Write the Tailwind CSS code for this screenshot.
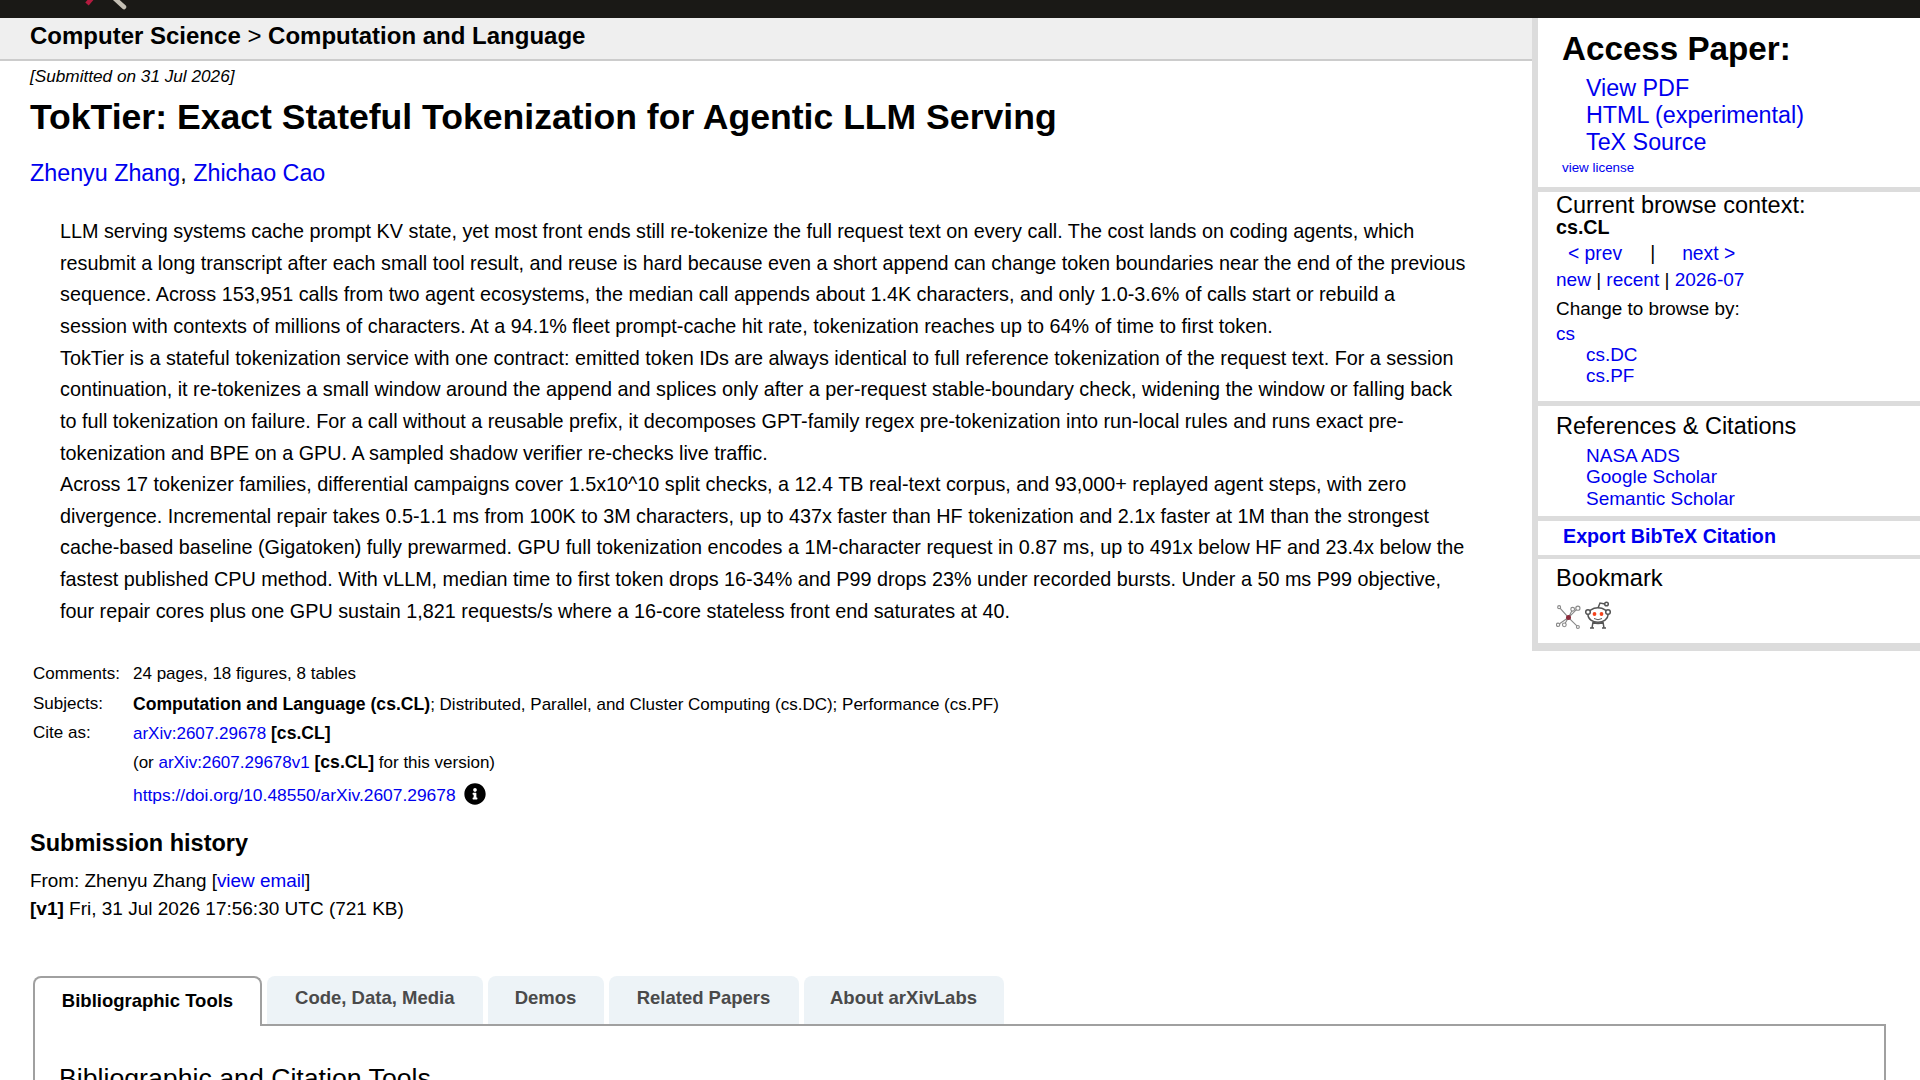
<!DOCTYPE html>
<html lang="en">
<head>
<meta charset="utf-8">
<title>TokTier</title>
<script src="https://cdn.jsdelivr.net/npm/@tailwindcss/browser@4"></script>
</head>
<body class="h-[1080px] overflow-hidden bg-white text-black font-['Liberation_Sans',Arial,sans-serif]">
<header class="h-[18px] bg-[#1a1916] overflow-hidden">
  <svg width="160" height="18" viewBox="0 0 160 18"><path d="M93 -3 L87 4" stroke="#b31b3f" stroke-width="4.5" fill="none"/><path d="M113 -3 L124 7" stroke="#c4bfb4" stroke-width="4.5" stroke-linecap="round" fill="none"/></svg>
</header>
<div class="flex items-start">
  <main class="w-[1532px] shrink-0">
    <div class="h-[43px] bg-[#efefef] border-b-2 border-[#ccc] pl-[30px] pt-[2.5px] text-[24px] leading-[30px] font-bold">Computer Science <span class="font-normal">&gt;</span> Computation and Language</div>
    <div class="pl-[30px] pr-[40px]">
      <p class="mt-[3px] text-[17.2px] leading-[24px] italic">[Submitted on 31 Jul 2026]</p>
      <h1 class="mt-[8px] text-[35.6px] leading-[42px] font-bold">TokTier: Exact Stateful Tokenization for Agentic LLM Serving</h1>
      <p class="mt-[20px] text-[23.3px] leading-[30px]"><a class="text-[#0000ee]" href="#">Zhenyu Zhang</a>, <a class="text-[#0000ee]" href="#">Zhichao Cao</a></p>
      <blockquote class="mt-[28.2px] pl-[30px] text-[19.8px] leading-[31.63px] whitespace-nowrap">
        LLM serving systems cache prompt KV state, yet most front ends still re-tokenize the full request text on every call. The cost lands on coding agents, which<br>
        resubmit a long transcript after each small tool result, and reuse is hard because even a short append can change token boundaries near the end of the previous<br>
        sequence. Across 153,951 calls from two agent ecosystems, the median call appends about 1.4K characters, and only 1.0-3.6% of calls start or rebuild a<br>
        session with contexts of millions of characters. At a 94.1% fleet prompt-cache hit rate, tokenization reaches up to 64% of time to first token.<br>
        TokTier is a stateful tokenization service with one contract: emitted token IDs are always identical to full reference tokenization of the request text. For a session<br>
        continuation, it re-tokenizes a small window around the append and splices only after a per-request stable-boundary check, widening the window or falling back<br>
        to full tokenization on failure. For a call without a reusable prefix, it decomposes GPT-family regex pre-tokenization into run-local rules and runs exact pre-<br>
        tokenization and BPE on a GPU. A sampled shadow verifier re-checks live traffic.<br>
        Across 17 tokenizer families, differential campaigns cover 1.5x10^10 split checks, a 12.4 TB real-text corpus, and 93,000+ replayed agent steps, with zero<br>
        divergence. Incremental repair takes 0.5-1.1 ms from 100K to 3M characters, up to 437x faster than HF tokenization and 2.1x faster at 1M than the strongest<br>
        cache-based baseline (Gigatoken) fully prewarmed. GPU full tokenization encodes a 1M-character request in 0.87 ms, up to 491x below HF and 23.4x below the<br>
        fastest published CPU method. With vLLM, median time to first token drops 16-34% and P99 drops 23% under recorded bursts. Under a 50 ms P99 objective,<br>
        four repair cores plus one GPU sustain 1,821 requests/s where a 16-core stateless front end saturates at 40.
      </blockquote>
      <table class="mt-[31.2px] ml-[3px] text-[17px]">
        <tbody>
          <tr class="h-[31px]"><td class="w-[100px] align-middle">Comments:</td><td>24 pages, 18 figures, 8 tables</td></tr>
          <tr class="h-[29px]"><td>Subjects:</td><td><span class="font-bold text-[17.6px]">Computation and Language (cs.CL)</span>; Distributed, Parallel, and Cluster Computing (cs.DC); Performance (cs.PF)</td></tr>
          <tr class="h-[29px]"><td>Cite as:</td><td><a class="text-[#0000ee]" href="#">arXiv:2607.29678</a> <span class="font-bold text-[17.6px]">[cs.CL]</span></td></tr>
          <tr class="h-[30px]"><td></td><td>(or <a class="text-[#0000ee]" href="#">arXiv:2607.29678v1</a> <span class="font-bold text-[17.6px]">[cs.CL]</span> for this version)</td></tr>
          <tr class="h-[36px]"><td></td><td><span class="inline-flex items-center gap-[8px]"><a class="text-[#0000ee] text-[17.4px]" href="#">https://doi.org/10.48550/arXiv.2607.29678</a>
            <svg width="22" height="22" viewBox="0 0 512 512" class="-mt-[3px]"><path fill="#000" d="M256 8C119 8 8 119 8 256s111 248 248 248 248-111 248-248S393 8 256 8zm0 110c23 0 42 19 42 42s-19 42-42 42-42-19-42-42 19-42 42-42zm56 254c0 7-5 12-12 12h-88c-7 0-12-5-12-12v-24c0-7 5-12 12-12h12v-64h-12c-7 0-12-5-12-12v-24c0-7 5-12 12-12h64c7 0 12 5 12 12v100h12c7 0 12 5 12 12v24z"/></svg></span></td></tr>
        </tbody>
      </table>
      <h2 class="mt-[14px] text-[23.5px] leading-[30px] font-bold">Submission history</h2>
      <p class="mt-[9.2px] text-[18.9px] leading-[28px]">From: Zhenyu Zhang [<a class="text-[#0000ee]" href="#">view email</a>]</p>
      <p class="text-[19px] leading-[28px]"><b>[v1]</b> Fri, 31 Jul 2026 17:56:30 UTC (721 KB)</p>
    </div>
  </main>
  <aside class="w-[388px] shrink-0 border-l-[6px] border-b-[8px] border-[#dcdcdc] h-[633px]">
    <section class="h-[174px] border-b-[5px] border-[#dcdcdc] pl-[24px] pt-[12px]">
      <h2 class="text-[33.2px] leading-[38px] font-bold">Access Paper:</h2>
      <ul class="pl-[24px] mt-[6.5px] text-[23.3px] leading-[27px] text-[#0000ee]"><li>View PDF</li><li>HTML (experimental)</li><li>TeX Source</li></ul>
      <p class="mt-[3px] text-[13.4px] leading-[18px] text-[#0000ee]">view license</p>
    </section>
    <section class="h-[214px] border-b-[5px] border-[#dcdcdc] pl-[18px]">
      <h3 class="text-[23.5px] leading-[26px]">Current browse context:</h3>
      <p class="text-[19.7px] leading-[18px] font-bold">cs.CL</p>
      <p class="mt-[4.5px] text-[19.3px] leading-[26px] flex"><a class="text-[#0000ee] ml-[12px]" href="#">&lt; prev</a><span class="ml-[28px]">|</span><a class="text-[#0000ee] ml-[27px]" href="#">next &gt;</a></p>
      <p class="text-[19px] leading-[25px]"><a class="text-[#0000ee]" href="#">new</a> | <a class="text-[#0000ee]" href="#">recent</a> | <a class="text-[#0000ee]" href="#">2026-07</a></p>
      <p class="mt-[5px] text-[18.9px] leading-[24px]">Change to browse by:</p>
      <ul class="mt-[2.5px] text-[18.9px] leading-[21px] text-[#0000ee]"><li>cs</li><li class="pl-[30px]">cs.DC</li><li class="pl-[30px]">cs.PF</li></ul>
    </section>
    <section class="h-[115px] border-b-[5px] border-[#dcdcdc] pl-[18px]">
      <h3 class="pt-[5.5px] text-[23.5px] leading-[28px]">References &amp; Citations</h3>
      <ul class="mt-[5.5px] pl-[30px] text-[19px] leading-[21.3px] text-[#0000ee]"><li>NASA ADS</li><li>Google Scholar</li><li>Semantic Scholar</li></ul>
    </section>
    <section class="h-[38px] border-b-[4px] border-[#dcdcdc] pl-[25px] pt-[2px] text-[19.7px] leading-[26px] font-bold text-[#0000ee]">Export BibTeX Citation</section>
    <section class="pl-[18px]">
      <h3 class="pt-[4px] text-[23.7px] leading-[30px]">Bookmark</h3>
      <div class="mt-[7.5px] flex items-end gap-[3px]">
        <svg width="25" height="25" viewBox="0 0 24 24" fill="none" stroke="#8a8a8a" stroke-width="1.1"><path d="M12 13 L3 3 M12 13 L21 4 M12 13 L2 20 M12 13 L21 22 M12 13 L8 20 M12 13 L16 5"/><circle cx="3" cy="3" r="1.4" fill="#fff"/><circle cx="21" cy="4" r="2" fill="#fff"/><circle cx="16" cy="5" r="1.8" fill="#fff"/><circle cx="2" cy="20" r="1.6" fill="#fff"/><circle cx="8" cy="20" r="1.8" fill="#fff"/><circle cx="21" cy="22" r="1.4" fill="#fff"/><circle cx="12" cy="13" r="2.4" fill="#8c2c3c" stroke="none"/></svg>
        <svg width="28" height="28" viewBox="0 0 28 28" fill="none" stroke="#555" stroke-width="1.5"><ellipse cx="14" cy="14" rx="10" ry="7.2" fill="#fff"/><circle cx="4" cy="11" r="2.3" fill="#fff"/><circle cx="24" cy="11" r="2.3" fill="#fff"/><path d="M14 7 L16 2 L21 3"/><circle cx="22.5" cy="3" r="1.8" fill="#fff"/><path d="M9 21 L8 27 M19 21 L20 27 M9 21 Q14 24 19 21 M6 27h4 M18 27h4"/><circle cx="10.5" cy="13" r="1.9" fill="#f4431c" stroke="none"/><circle cx="17.5" cy="13" r="1.9" fill="#f4431c" stroke="none"/><path d="M10 17.5 q4 2.5 8 0" stroke-width="1"/></svg>
      </div>
    </section>
  </aside>
</div>
<section class="mt-[53px] ml-[33px] w-[1853px]">
  <div class="flex items-end gap-[5px] h-[48px] text-[18.5px] font-bold leading-[24px]">
    <div class="relative z-10 h-[50px] -mb-[2px] w-[229px] pb-[2px] bg-white border-2 border-b-0 border-[#a0a0a0] rounded-t-[8px] flex items-center justify-center text-black">Bibliographic Tools</div>
    <div class="h-[48px] w-[215.5px] pb-[4px] bg-[#edf3f7] rounded-t-[8px] flex items-center justify-center text-[#4a4a4a]">Code, Data, Media</div>
    <div class="h-[48px] w-[116px] pb-[4px] bg-[#edf3f7] rounded-t-[8px] flex items-center justify-center text-[#4a4a4a]">Demos</div>
    <div class="h-[48px] w-[190px] pb-[4px] bg-[#edf3f7] rounded-t-[8px] flex items-center justify-center text-[#4a4a4a]">Related Papers</div>
    <div class="h-[48px] w-[200px] pb-[4px] bg-[#edf3f7] rounded-t-[8px] flex items-center justify-center text-[#4a4a4a]">About arXivLabs</div>
  </div>
  <div class="border-2 border-[#a0a0a0] pl-[24px] pt-[37px] h-[200px]">
    <h2 class="text-[26.7px] leading-[30px]">Bibliographic and Citation Tools</h2>
  </div>
</section>
</body>
</html>
